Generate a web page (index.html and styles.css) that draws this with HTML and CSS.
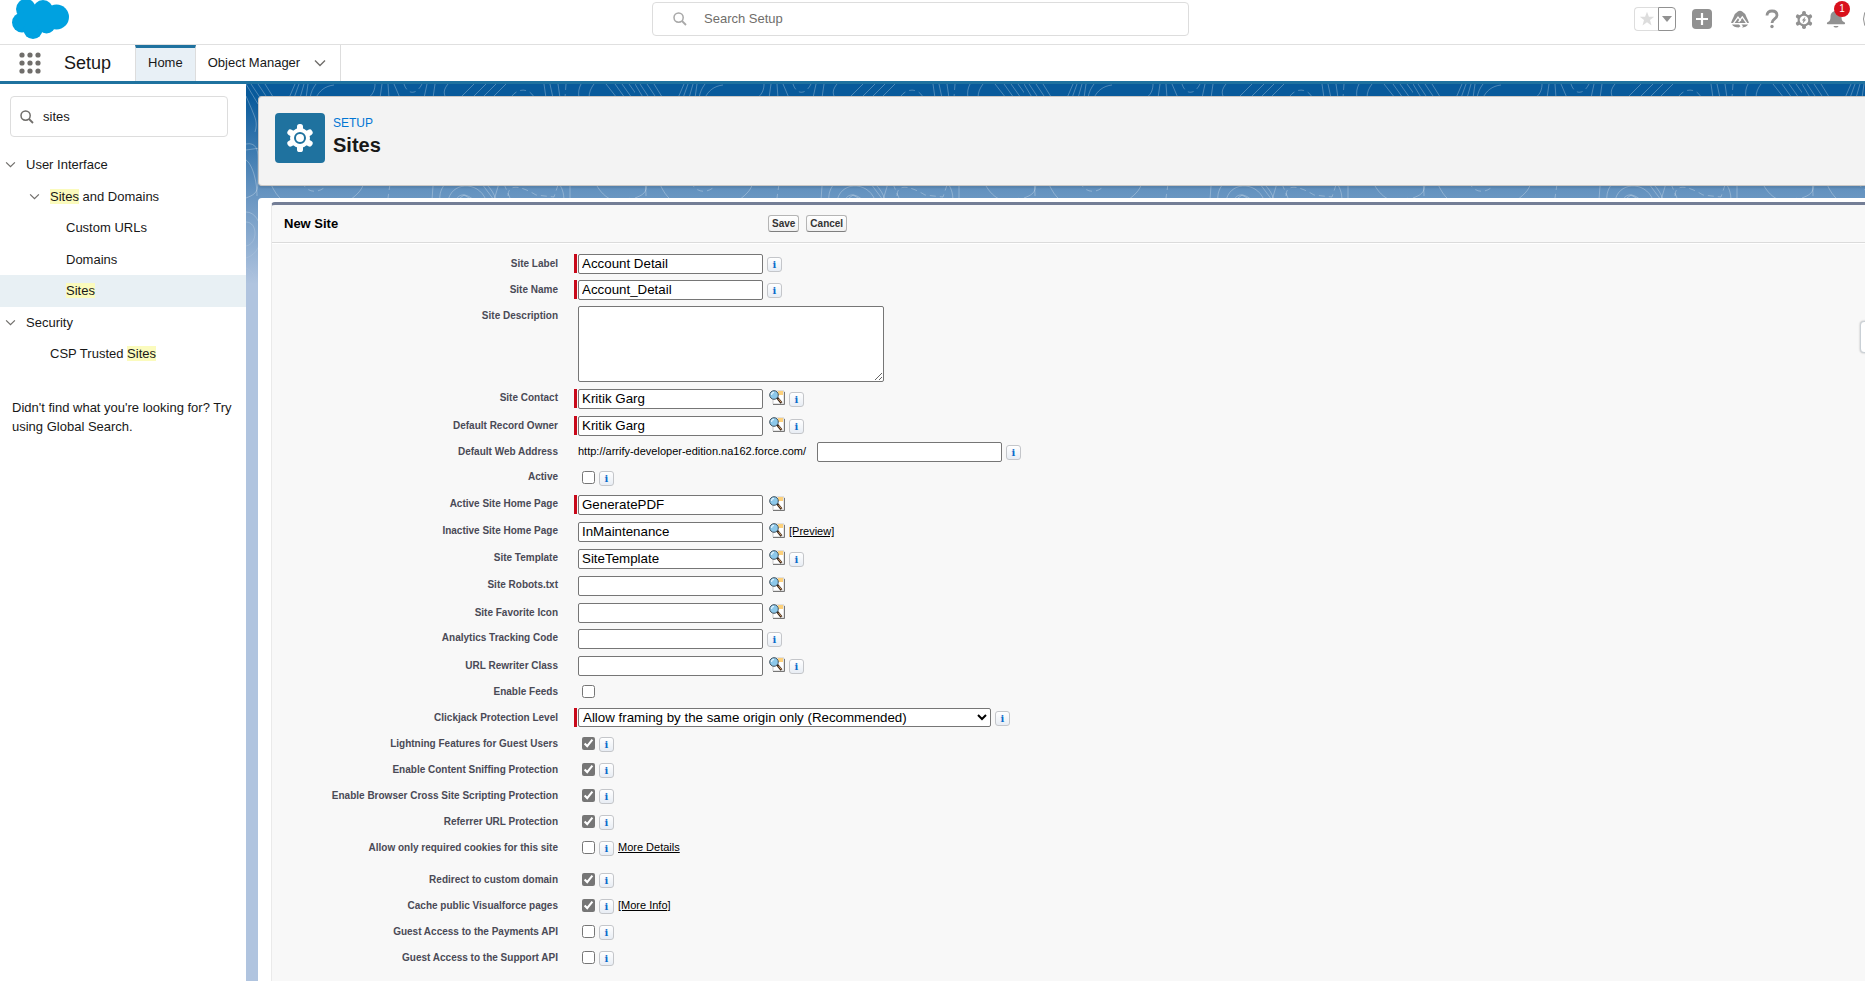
FILE: index.html
```html
<!DOCTYPE html>
<html lang="en">
<head>
<meta charset="utf-8">
<title>Sites | Setup</title>
<link rel="stylesheet" href="styles.css">
</head>
<body>
<svg class="sprite" aria-hidden="true">
  <symbol id="chevron" viewBox="0 0 12 8"><path d="M1 1.5l5 5 5-5" fill="none" stroke="#706e6b" stroke-width="1.4"/></symbol>
  <symbol id="search" viewBox="0 0 14 14"><circle cx="5.6" cy="5.6" r="4.6" fill="none" stroke="currentColor" stroke-width="1.5"/><path d="M9 9l4 4" stroke="currentColor" stroke-width="1.8"/></symbol>
  <symbol id="gear" viewBox="-14 -14 28 28">
    <g fill="currentColor"><circle r="10"/><rect x="-3" y="-14" width="6" height="28" rx="2.6"/><rect x="-3" y="-14" width="6" height="28" rx="2.6" transform="rotate(60)"/><rect x="-3" y="-14" width="6" height="28" rx="2.6" transform="rotate(120)"/></g>
  </symbol>
  <symbol id="lookup" viewBox="0 0 16 15">
    <path d="M4 1h11v13H4z" fill="#fff" stroke="#c9c9c9"/><path d="M15.5 2v12.5H4" fill="none" stroke="#777"/>
    <path d="M9 1h5v4H9z" fill="#fdd17c"/>
    <path d="M8 7.500l4.500 5.500" stroke="#3b2a1c" stroke-width="2.4"/><path d="M9.500 9l2.800 3.400" stroke="#d9a06b" stroke-width="1"/>
    <circle cx="5" cy="5" r="4.3" fill="#8cc8ea" stroke="#44545f" stroke-width="1"/><path d="M2.5 5A2.7 2.7 0 0 1 5 2.4" fill="none" stroke="#dff3ff" stroke-width="1.2"/>
  </symbol>
</svg>

<header class="top">
  <div class="top-logo">
    <svg class="cloud" viewBox="12 0 58 40" role="img" aria-label="Salesforce"><g fill="#00a1e0"><circle cx="26" cy="9" r="10"/><circle cx="43" cy="10" r="10"/><circle cx="56.500" cy="17" r="12.5"/><circle cx="22" cy="22.500" r="10"/><circle cx="33" cy="29.500" r="9.500"/><circle cx="46.500" cy="24.500" r="9"/><path d="M24 9h30v15H24z"/></g></svg>
  </div>
  <label class="global-search"><svg class="search-icon"><use href="#search"/></svg><input type="text" placeholder="Search Setup" aria-label="Search Setup"></label>
  <div class="actions">
    <div class="fav">
      <button class="fav-star" aria-label="Favorite"><svg width="16" height="16" viewBox="0 0 16 16"><path d="M8 .8l1.900 5h5.300l-4.200 3.300 1.500 5.300L8 11.300l-4.500 3.100L5 9.100.8 5.800h5.300z" fill="#ddd"/></svg></button>
      <button class="fav-menu" aria-label="Favorites list"><svg width="10" height="6" viewBox="0 0 10 6"><path d="M0 0h10L5 6z" fill="#919191"/></svg></button>
    </div>
    <button class="act act-add" aria-label="Add"><svg viewBox="0 0 20 20"><rect width="20" height="20" rx="4" fill="#919191"/><path d="M10 4v12M4 10h12" stroke="#fff" stroke-width="2.200"/></svg></button>
    <button class="act" aria-label="Guidance"><svg viewBox="0 0 20 20"><path d="M1 15C1 12 3 10 4 7c.5-2 2-3 3.500-4.200 1.500-1.300 3.500-1.300 5 0C14 4 15.500 5 16 7c1 3 3 5 3 8z" fill="#919191"/><path d="M3 15.200l5-7 2.800 3.600M8.600 13l3.700-5.200 5 7.400" fill="none" stroke="#fff" stroke-width="1.300"/><path d="M0 14.500h20" stroke="#fff"/><path d="M2 15.500h7l1.500 1.800-1.800 1.200C5.500 18.500 3 17.500 2 15.500zM11.500 15.500H18c-1 2-3.500 3-6 3l1-1.200z" fill="#919191"/></svg></button>
    <button class="act" aria-label="Help"><svg viewBox="0 0 20 20"><path d="M5 6.500C5 3.500 7 2 10 2s5 1.700 5 4.300c0 3.700-5 3.500-5 7.700" fill="none" stroke="#919191" stroke-width="2.800"/><circle cx="10" cy="17.500" r="1.700" fill="#919191"/></svg></button>
    <button class="act" aria-label="Setup"><svg viewBox="0 0 20 20"><use href="#gear" x="1" y="2" width="18" height="18"/><circle cx="10" cy="11" r="4.300" fill="#fff"/><path d="M11.500 7.500L7.800 11.500h1.700l-1 3.200 3.800-4.300h-1.900z" fill="#919191"/></svg></button>
    <button class="act bell" aria-label="Notifications"><svg viewBox="0 0 20 20"><path d="M10 2c3.500 0 5.500 2.500 5.500 6 0 3 .8 4.300 3 5.300.8.400.9 2-.3 2H1.800c-1.200 0-1.100-1.600-.3-2 2.200-1 3-2.300 3-5.300 0-3.500 2-6 5.500-6zM7.500 17h5c-.5 2-4.500 2-5 0z" fill="#919191"/></svg><span class="badge">1</span></button>
    <button class="avatar" aria-label="User"></button>
  </div>
</header>

<nav class="nav">
  <button class="waffle" aria-label="App launcher"><svg width="22" height="22" viewBox="0 0 22 22" fill="#706e6b"><circle cx="3" cy="3" r="2.600"/><circle cx="11" cy="3" r="2.600"/><circle cx="19" cy="3" r="2.600"/><circle cx="3" cy="11" r="2.600"/><circle cx="11" cy="11" r="2.600"/><circle cx="19" cy="11" r="2.600"/><circle cx="3" cy="19" r="2.600"/><circle cx="11" cy="19" r="2.600"/><circle cx="19" cy="19" r="2.600"/></svg></button>
  <span class="app-name">Setup</span>
  <a class="tab tab-active" href="#">Home</a>
  <a class="tab" href="#">Object Manager <svg class="chev"><use href="#chevron"/></svg></a>
</nav>

<div class="shell">
  <aside class="side">
    <label class="side-search"><svg class="search-icon"><use href="#search"/></svg><input type="text" value="sites" aria-label="Quick Find"></label>
    <ul class="tree">
      <li class="lvl1"><svg class="twist"><use href="#chevron"/></svg><a href="#">User Interface</a></li>
      <li class="lvl2"><svg class="twist"><use href="#chevron"/></svg><a href="#"><mark>Sites</mark> and Domains</a></li>
      <li class="lvl3"><a href="#">Custom URLs</a></li>
      <li class="lvl3"><a href="#">Domains</a></li>
      <li class="lvl3 current"><a href="#"><mark>Sites</mark></a></li>
      <li class="lvl1"><svg class="twist"><use href="#chevron"/></svg><a href="#">Security</a></li>
      <li class="leaf2"><a href="#">CSP Trusted <mark>Sites</mark></a></li>
    </ul>
    <p class="hint">Didn't find what you're looking for? Try using Global Search.</p>
  </aside>

  <main class="main">
    <svg class="contours" aria-hidden="true">
      <defs><pattern id="topo" width="389" height="200" patternUnits="userSpaceOnUse">
        <g fill="none" stroke="#fff" stroke-opacity=".28">
          <path d="M0 0l12 20M5 0l12 18M12 0l12 18M19 0l10 16M0 12l6 14c3 8 6 12 3 22M43 14L49 0M48 14l5-14M54 14l4-14M60 14l2-14M64 14c1-6 3-10 6-14M70 14c3-7 9-12 18-13M122 14c6-4 7-10 7-14M136 0l-2 14M142 0l1 14M148 0l6 14M178 14l3-14M187 14l2-14M200 14c-3-5-2-9 2-14M214 14L228 0M226 14L240 0M236 14L250 0M246 14L260 0M298 0l2 14M304 0l3 14M312 0l2 14M333 14c-1-6 0-10 2-14M343 14c0-6 2-10 5-14M360 0l11 14M369 0l10 14M376 0l10 14M383 0l10 14"/>
          <path d="M158 0c3 10 12 12 18 0M266 12c6-8 17-8 22 1M320 0l-1 14" stroke-dasharray="6 4"/>
          <path d="M0 60c10-2 12 6 12 14v24c0 12-5 13-12 16M0 76c6 4 11 20 11 36M0 66l14-2M23 96c6 14 12 22 22 24M118 96c0 8-6 14-14 20M194 118c-4-32 46-36 56-2M202 118c2-20 30-22 38-2M210 116c4-8 12-6 20 2M214 114l4-3 12 7M236 100l12 16 6-20M312 98c4 6 6 10 6 20M324 98v20M350 100c8 16 24 22 34 14M186 116l1-14"/>
          <path d="M56 98c5 12 18 12 26 2M144 100l-2 14M262 112c0-16 20-6 28-1l18 2 4-12M258 100l6 14" stroke-dasharray="6 4"/>
          <path d="M0 138c12 0 12 22 0 24M0 128c18 0 22 40 0 46M0 184c5 2 8 6 9 12"/>
        </g></pattern>
        <linearGradient id="fade" x2="0" y2="1"><stop offset="0" stop-color="#fff"/><stop offset=".6" stop-color="#fff"/><stop offset="1" stop-color="#000"/></linearGradient>
        <mask id="fademask"><rect width="100%" height="200" fill="url(#fade)"/></mask></defs>
      <rect width="100%" height="200" fill="url(#topo)" mask="url(#fademask)"/>
    </svg>

    <section class="page-head">
      <span class="page-icon"><svg width="28" height="28" viewBox="-14 -14 28 28"><use href="#gear" x="-14" y="-14" width="28" height="28"/><circle r="5" fill="#fff" stroke="#1f729f" stroke-width="2"/></svg></span>
      <div><div class="eyebrow">SETUP</div><h1>Sites</h1></div>
    </section>

    <section class="card">
      <form class="edit">
        <div class="edit-head"><h2>New Site</h2><div class="btns"><button type="button" class="btn">Save</button><button type="button" class="btn">Cancel</button></div></div>
        <div class="rows">
          <div class="row"><label for="f1">Site Label</label><div class="field req"><input id="f1" type="text" value="Account Detail"><button type="button" class="info">i</button></div></div>
          <div class="row"><label for="f2">Site Name</label><div class="field req"><input id="f2" type="text" value="Account_Detail"><button type="button" class="info">i</button></div></div>
          <div class="row row-area"><label for="f3">Site Description</label><div class="field"><textarea id="f3"></textarea></div></div>
          <div class="row row-lookup"><label for="f4">Site Contact</label><div class="field req"><input id="f4" type="text" value="Kritik Garg"><button type="button" class="look" aria-label="Lookup"><svg><use href="#lookup"/></svg></button><button type="button" class="info">i</button></div></div>
          <div class="row"><label for="f5">Default Record Owner</label><div class="field req"><input id="f5" type="text" value="Kritik Garg"><button type="button" class="look" aria-label="Lookup"><svg><use href="#lookup"/></svg></button><button type="button" class="info">i</button></div></div>
          <div class="row"><label for="f6">Default Web Address</label><div class="field"><span class="prefix">http://arrify-developer-edition.na162.force.com/</span><input id="f6" type="text"><button type="button" class="info">i</button></div></div>
          <div class="row row-lookup"><label for="f7">Active</label><div class="field"><input id="f7" type="checkbox"><button type="button" class="info">i</button></div></div>
          <div class="row row-lookup"><label for="f8">Active Site Home Page</label><div class="field req"><input id="f8" type="text" value="GeneratePDF"><button type="button" class="look" aria-label="Lookup"><svg><use href="#lookup"/></svg></button></div></div>
          <div class="row row-lookup"><label for="f9">Inactive Site Home Page</label><div class="field"><input id="f9" type="text" value="InMaintenance"><button type="button" class="look" aria-label="Lookup"><svg><use href="#lookup"/></svg></button><a href="#">[Preview]</a></div></div>
          <div class="row row-lookup"><label for="f10">Site Template</label><div class="field"><input id="f10" type="text" value="SiteTemplate"><button type="button" class="look" aria-label="Lookup"><svg><use href="#lookup"/></svg></button><button type="button" class="info">i</button></div></div>
          <div class="row row-lookup"><label for="f11">Site Robots.txt</label><div class="field"><input id="f11" type="text"><button type="button" class="look" aria-label="Lookup"><svg><use href="#lookup"/></svg></button></div></div>
          <div class="row"><label for="f12">Site Favorite Icon</label><div class="field"><input id="f12" type="text"><button type="button" class="look" aria-label="Lookup"><svg><use href="#lookup"/></svg></button></div></div>
          <div class="row row-lookup"><label for="f13">Analytics Tracking Code</label><div class="field"><input id="f13" type="text"><button type="button" class="info">i</button></div></div>
          <div class="row"><label for="f14">URL Rewriter Class</label><div class="field"><input id="f14" type="text"><button type="button" class="look" aria-label="Lookup"><svg><use href="#lookup"/></svg></button><button type="button" class="info">i</button></div></div>
          <div class="row"><label for="f15">Enable Feeds</label><div class="field"><input id="f15" type="checkbox"></div></div>
          <div class="row"><label for="f16">Clickjack Protection Level</label><div class="field req"><select id="f16"><option>Allow framing by the same origin only (Recommended)</option></select><button type="button" class="info">i</button></div></div>
          <div class="row"><label for="f17">Lightning Features for Guest Users</label><div class="field"><input id="f17" type="checkbox" checked><button type="button" class="info">i</button></div></div>
          <div class="row"><label for="f18">Enable Content Sniffing Protection</label><div class="field"><input id="f18" type="checkbox" checked><button type="button" class="info">i</button></div></div>
          <div class="row"><label for="f19">Enable Browser Cross Site Scripting Protection</label><div class="field"><input id="f19" type="checkbox" checked><button type="button" class="info">i</button></div></div>
          <div class="row"><label for="f20">Referrer URL Protection</label><div class="field"><input id="f20" type="checkbox" checked><button type="button" class="info">i</button></div></div>
          <div class="row row-spaced"><label for="f21">Allow only required cookies for this site</label><div class="field"><input id="f21" type="checkbox"><button type="button" class="info">i</button><a href="#">More Details</a></div></div>
          <div class="row"><label for="f22">Redirect to custom domain</label><div class="field"><input id="f22" type="checkbox" checked><button type="button" class="info">i</button></div></div>
          <div class="row"><label for="f23">Cache public Visualforce pages</label><div class="field"><input id="f23" type="checkbox" checked><button type="button" class="info">i</button><a href="#">[More Info]</a></div></div>
          <div class="row"><label for="f24">Guest Access to the Payments API</label><div class="field"><input id="f24" type="checkbox"><button type="button" class="info">i</button></div></div>
          <div class="row"><label for="f25">Guest Access to the Support API</label><div class="field"><input id="f25" type="checkbox"><button type="button" class="info">i</button></div></div>
        </div>
      </form>
    </section>
    <button class="drawer" aria-label="Open panel"></button>
  </main>
</div>
</body>
</html>
```

FILE: styles.css
```css
* { box-sizing: border-box; }
html, body { height: 100%; }
body {
  margin: 0;
  display: flex;
  flex-direction: column;
  overflow: hidden;
  font: 13px/1.5 "Liberation Sans", Arial, sans-serif;
  color: #181818;
  background: #fff;
}
button { padding: 0; border: 0; background: none; font-family: inherit; color: inherit; }
a { color: inherit; text-decoration: none; }
h1, h2, p, ul { margin: 0; padding: 0; }
.sprite { position: absolute; width: 0; height: 0; }

/* Top bar */
.top {
  display: flex;
  flex: none;
  height: 45px;
  padding-right: 24px;
  border-bottom: 1px solid #e0e0e0;
}
.top-logo { flex: 1; }
.cloud { display: block; width: 58px; height: 40px; margin-left: 12px; }
.global-search {
  display: flex;
  align-items: center;
  width: 537px;
  height: 34px;
  margin-top: 2px;
  padding-left: 20px;
  gap: 17px;
  border: 1px solid #ddd;
  border-radius: 4px;
  color: #a8a8a8;
}
.search-icon { flex: none; width: 14px; height: 14px; }
.global-search input, .side-search input {
  flex: 1;
  min-width: 0;
  border: 0;
  outline: 0;
  padding: 0;
  background: none;
  font: inherit;
  color: #181818;
}
.global-search input::placeholder { color: #706e6b; }
.actions {
  display: flex;
  flex: 1;
  justify-content: flex-end;
  gap: 12px;
  height: 24px;
  margin-top: 7px;
  align-items: center;
}
.fav { display: flex; height: 24px; margin-right: 4px; }
.fav button { display: flex; align-items: center; justify-content: center; }
.fav-star { width: 24px; border: 1px solid #ddd; border-right: 0; border-radius: 4px 0 0 4px; }
.fav-menu { width: 18px; border: 1px solid #919191; border-radius: 0 4px 4px 0; }
.act { position: relative; width: 20px; height: 20px; color: #919191; }
.act svg { display: block; width: 20px; height: 20px; }
.act-add { margin-right: 6px; }
.badge {
  position: absolute;
  left: 8px;
  top: -8px;
  width: 16px;
  height: 16px;
  border-radius: 50%;
  background: #d8101b;
  color: #fff;
  font-size: 10px;
  line-height: 16px;
  text-align: center;
}
.avatar {
  flex: none;
  width: 32px;
  height: 32px;
  margin: 0 -54px 0 5px;
  border: 1px solid #919191;
  border-radius: 50%;
}

/* Navigation */
.nav {
  display: flex;
  flex: none;
  height: 39px;
  padding-left: 19px;
  border-bottom: 3px solid #1f729f;
}
.waffle { display: flex; align-items: center; width: 45px; }
.app-name { width: 71px; font-size: 18px; line-height: 36px; }
.tab {
  display: flex;
  align-items: center;
  gap: 14px;
  padding: 0 14px 0 12px;
  border-right: 1px solid #ddd;
}
.tab-active {
  padding: 0 12px 3px;
  border-top: 3px solid #1f729f;
  border-left: 1px solid #ddd;
  background: #e8f0f6;
}
.chev { width: 12px; height: 8px; }

/* Side tree */
.shell { display: flex; flex: 1; min-height: 0; }
.side { flex: none; width: 246px; padding-top: 12px; background: #fff; }
.side-search {
  display: flex;
  align-items: center;
  height: 41px;
  margin: 0 18px 12px 10px;
  padding-left: 9px;
  gap: 9px;
  border: 1px solid #ddd;
  border-radius: 4px;
  color: #706e6b;
}
.tree { list-style: none; }
.tree li { display: flex; align-items: center; gap: 10px; padding: 6px 0; }
.twist { width: 11px; height: 7px; }
.tree .lvl1 { padding-left: 5px; }
.tree .lvl2 { padding-left: 29px; }
.tree .lvl3 { padding-left: 66px; }
.tree .leaf2 { padding-left: 50px; }
.tree .current { background: #e8f0f4; }
mark { background: #fbfbbd; color: inherit; }
.hint { padding: 28px 12px 0; }

/* Main area */
.main {
  position: relative;
  flex: 1;
  min-width: 0;
  display: flex;
  flex-direction: column;
  gap: 12px;
  padding: 12px 0 0 12px;
  background: linear-gradient(#085a9b 0, #085a9b 12px, #6593c0 108px, #b0c4df 200px);
}
.contours { position: absolute; left: 0; top: 0; width: 100%; height: 200px; }
.page-head {
  position: relative;
  display: flex;
  gap: 8px;
  flex: none;
  height: 90px;
  padding: 16px;
  border: 1px solid #c9c7c5;
  border-right: 0;
  border-radius: 4px 0 0 4px;
  background: #f3f3f3;
  box-shadow: 0 2px 2px rgba(0, 0, 0, .1);
}
.page-icon {
  display: flex;
  align-items: center;
  justify-content: center;
  width: 50px;
  height: 50px;
  border-radius: 4px;
  background: #1f729f;
  color: #fff;
}
.eyebrow { font-size: 12px; line-height: 20px; color: #0176d3; }
h1 { font-size: 20px; line-height: 24px; }
.card {
  position: relative;
  flex: 1;
  display: flex;
  padding: 4px 0 0 13px;
  border-radius: 4px 0 0 0;
  background: #fff;
}
.edit {
  flex: 1;
  border-top: 3px solid #747e96;
  border-left: 1px solid #eaeaea;
  border-radius: 4px 0 0 0;
  background: #f8f8f8;
}
.edit-head {
  display: flex;
  height: 39px;
  padding-left: 12px;
  border-bottom: 1px solid #fff;
  box-shadow: inset 0 -1px #dbdbdb;
}
h2 { width: 484px; font-size: 13px; line-height: 38px; color: #000; }
.btns { display: flex; gap: 7px; padding-top: 10px; }
.btn {
  height: 17px;
  padding: 0 3px;
  border: 1px solid #b5b5b5;
  border-bottom-color: #7f7f7f;
  border-radius: 3px;
  background: linear-gradient(#fff, #f0f0f0);
  color: #333;
  font-size: 10px;
  font-weight: bold;
  line-height: 15px;
}

/* Form rows */
.rows { padding-top: 7px; font-size: 11px; color: #000; }
.row { display: flex; min-height: 26px; }
.row-lookup { min-height: 27px; }
.row-area { min-height: 83px; }
.row-spaced { min-height: 32px; }
.row > label {
  width: 286px;
  font-size: 10px;
  font-weight: bold;
  line-height: 25px;
  text-align: right;
  color: #4a4a56;
}
.row-lookup > label { line-height: 24px; }
.field {
  display: flex;
  align-items: flex-start;
  gap: 4px;
  margin-left: 16px;
  padding-top: 3px;
  padding-left: 4px;
}
.req { background: linear-gradient(#c8091a, #c8091a) 0 3px / 3px 19px no-repeat; }
.field input[type="text"], .field textarea, .field select {
  border: 1px solid #767676;
  border-radius: 2px;
  background-color: #fff;
  color: #000;
  font-family: inherit;
}
.field input[type="text"] { width: 185px; height: 20px; padding: 0 3px 1px; }
.field textarea { width: 306px; height: 76px; }
.field select { width: 413px; height: 19px; padding: 0; }
.field input[type="checkbox"] { width: 13px; height: 13px; margin: 3px 0 0 4px; accent-color: #767676; }
.prefix { min-width: 235px; line-height: 19px; }
.field a { line-height: 19px; text-decoration: underline; }
.info {
  width: 15px;
  height: 15px;
  margin-top: 3px;
  border: 1px solid #c4c6ca;
  border-radius: 3px;
  background: linear-gradient(#fff, #e8edf4);
  color: #0a6ccc;
  font: bold 10px/13px "DejaVu Serif", serif;
}
.look { width: 16px; height: 15px; margin: 1px 0 0 2px; }
.look svg { display: block; width: 16px; height: 15px; }
.drawer {
  position: absolute;
  right: -8px;
  top: 237px;
  width: 13px;
  height: 32px;
  border: 1px solid #c9d0d6;
  border-radius: 4px;
  background: #fff;
  box-shadow: 0 0 2px rgba(0, 0, 0, .3);
}
```
